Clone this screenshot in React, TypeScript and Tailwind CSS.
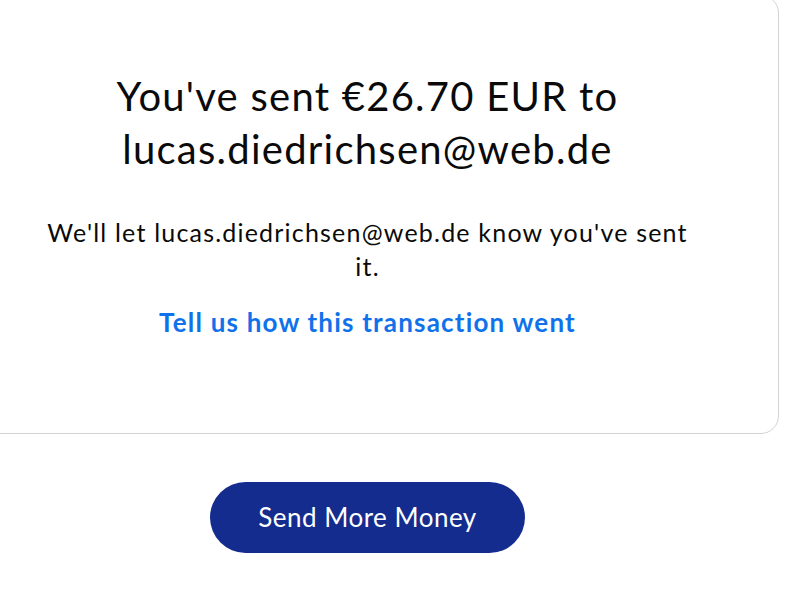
import React from "react";

export default function App() {
  return (
    <div className="min-h-[605px] w-[799px] overflow-hidden bg-white" style={{ fontFamily: "Lato, 'Open Sans', sans-serif" }}>
      <div className="ml-[-44px] w-[823px] mt-[-5px] flex flex-col items-center">
        <div className="w-full rounded-[18px] border border-[#d5d3cf] pt-[74px] pb-[95px] flex flex-col items-center text-center">
          <h1 className="text-[40px] leading-[53px] tracking-[1.25px] font-normal text-[#0a0a0a] w-[560px]">
            You've sent €26.70 EUR to lucas.diedrichsen@web.de
          </h1>
          <p className="mt-[39px] text-[25px] leading-[34px] tracking-[1.2px] text-[#0a0a0a] w-[670px]">
            We'll let lucas.diedrichsen@web.de know you've sent it.
          </p>
          <a className="mt-[23px] text-[26px] leading-[32px] tracking-[1.2px] font-bold text-[#1072eb]">
            Tell us how this transaction went
          </a>
        </div>
        <button className="mt-[48px] h-[71px] w-[315px] rounded-full bg-[#142c8e] text-white text-[26px] tracking-[0.5px]">
          Send More Money
        </button>
      </div>
    </div>
  );
}
